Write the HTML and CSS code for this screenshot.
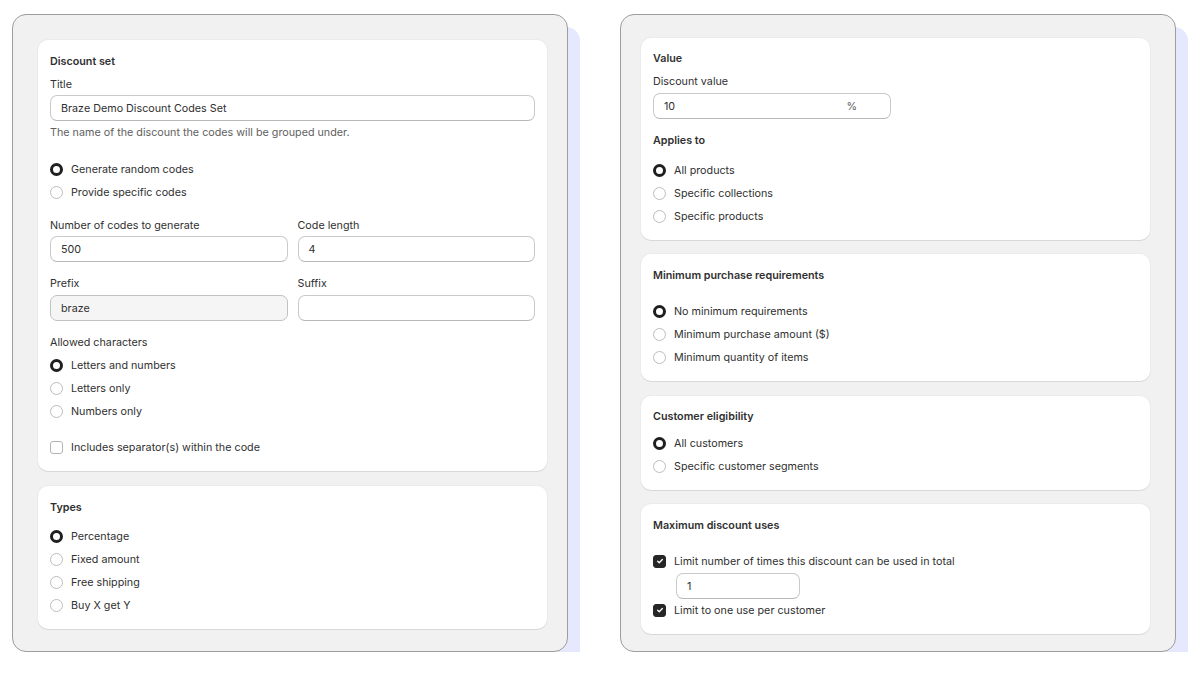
FILE: index.html
```html
<!DOCTYPE html>
<html>
<head>
<meta charset="utf-8">
<link rel="stylesheet" href="styles.css">
</head>
<body>
<div class="stage">
  <section class="panel panel-left">
    <div class="card card-set">
      <div class="row title">Discount set</div>
      <div class="row label mt7">Title</div>
      <div class="input mt3"><span>Braze Demo Discount Codes Set</span></div>
      <div class="row help mt3">The name of the discount the codes will be grouped under.</div>
      <div class="group mt21">
        <div class="row opt"><span class="radio on"></span>Generate random codes</div>
        <div class="row opt"><span class="radio"></span>Provide specific codes</div>
      </div>
      <div class="cols mt17">
        <div class="col">
          <div class="row label">Number of codes to generate</div>
          <div class="input mt3"><span>500</span></div>
        </div>
        <div class="col">
          <div class="row label">Code length</div>
          <div class="input mt3"><span>4</span></div>
        </div>
      </div>
      <div class="cols mt13">
        <div class="col">
          <div class="row label">Prefix</div>
          <div class="input filled mt4"><span>braze</span></div>
        </div>
        <div class="col">
          <div class="row label">Suffix</div>
          <div class="input mt4"></div>
        </div>
      </div>
      <div class="row label mt13">Allowed characters</div>
      <div class="group mt7">
        <div class="row opt"><span class="radio on"></span>Letters and numbers</div>
        <div class="row opt"><span class="radio"></span>Letters only</div>
        <div class="row opt"><span class="radio"></span>Numbers only</div>
      </div>
      <div class="row opt mt20"><span class="check"></span>Includes separator(s) within the code</div>
    </div>
    <div class="card card-types">
      <div class="row title">Types</div>
      <div class="group mt13">
        <div class="row opt"><span class="radio on"></span>Percentage</div>
        <div class="row opt"><span class="radio"></span>Fixed amount</div>
        <div class="row opt"><span class="radio"></span>Free shipping</div>
        <div class="row opt"><span class="radio"></span>Buy X get Y</div>
      </div>
    </div>
  </section>

  <section class="panel panel-right">
    <div class="card card-value">
      <div class="row title">Value</div>
      <div class="row label mt7">Discount value</div>
      <div class="input half mt4"><span>10</span><span class="suffix">%</span></div>
      <div class="row title mt13">Applies to</div>
      <div class="group mt14">
        <div class="row opt"><span class="radio on"></span>All products</div>
        <div class="row opt"><span class="radio"></span>Specific collections</div>
        <div class="row opt"><span class="radio"></span>Specific products</div>
      </div>
    </div>
    <div class="card card-min">
      <div class="row title">Minimum purchase requirements</div>
      <div class="group mt20">
        <div class="row opt"><span class="radio on"></span>No minimum requirements</div>
        <div class="row opt"><span class="radio"></span>Minimum purchase amount ($)</div>
        <div class="row opt"><span class="radio"></span>Minimum quantity of items</div>
      </div>
    </div>
    <div class="card card-elig">
      <div class="row title">Customer eligibility</div>
      <div class="group mt11">
        <div class="row opt"><span class="radio on"></span>All customers</div>
        <div class="row opt"><span class="radio"></span>Specific customer segments</div>
      </div>
    </div>
    <div class="card card-max">
      <div class="row title">Maximum discount uses</div>
      <div class="row opt mt20"><span class="check on"><svg viewBox="0 0 12 12" width="10" height="10"><path d="M3.2 6.3 L5.1 8.1 L8.8 4.2" fill="none" stroke="#fff" stroke-width="1.6" stroke-linecap="round" stroke-linejoin="round"/></svg></span>Limit number of times this discount can be used in total</div>
      <div class="input small mt4"><span>1</span></div>
      <div class="row opt mt3"><span class="check on"><svg viewBox="0 0 12 12" width="10" height="10"><path d="M3.2 6.3 L5.1 8.1 L8.8 4.2" fill="none" stroke="#fff" stroke-width="1.6" stroke-linecap="round" stroke-linejoin="round"/></svg></span>Limit to one use per customer</div>
    </div>
  </section>
</div>
</body>
</html>
```

FILE: styles.css
```css
* { box-sizing: border-box; }
html, body { margin: 0; padding: 0; background: #ffffff; }
body {
  font-family: Inter, "Noto Sans", "Liberation Sans", sans-serif;
  font-size: 10.75px;
  color: #303030;
}
.stage {
  display: flex;
  gap: 52px;
  padding: 14px 0 0 12px;
}
.panel {
  width: 556px;
  height: 638px;
  background: #f1f1f1;
  border: 1px solid #9d9d9d;
  border-radius: 14px;
  box-shadow: 12px 13px 0 0 #e6e8fd;
  display: flex;
  flex-direction: column;
}
.panel-left { padding: 25px 20px 0 25px; gap: 15px; }
.panel-right { padding: 23px 25px 0 20px; gap: 14px; }
.panel-right .card-elig { margin-top: 1px; }

.card {
  background: #ffffff;
  border-radius: 10px;
  box-shadow: 0 1px 0 0 #d8d8d8, 0 0 0 1px #ebebeb;
  padding: 13px 12px 16px 12px;
  display: flex;
  flex-direction: column;
}
.card-value, .card-elig { padding-top: 12px; }

.row {
  height: 16px;
  line-height: 17px;
  white-space: nowrap;
}
.title { font-weight: 600; color: #303030; }
.label { color: #303030; }
.help { color: #616161; }

.input {
  height: 26px;
  border: 1px solid #cacaca;
  border-bottom-color: #b8b8b8;
  border-radius: 7px;
  background: #fff;
  padding: 1px 10px 0;
  display: flex;
  align-items: center;
  line-height: 16px;
}
.input.filled { background: #f5f5f5; border-color: #c2c2c2; }
.input.half { width: 238px; }
.input.half .suffix { margin-left: auto; margin-right: 23px; color: #616161; }
.input.small { width: 124px; margin-left: 23px; }

.cols { display: flex; gap: 10px; }
.col { flex: 1; display: flex; flex-direction: column; }

.group { display: flex; flex-direction: column; gap: 7px; }
.opt { display: flex; align-items: center; gap: 8px; }

.radio {
  width: 13px;
  height: 13px;
  border-radius: 50%;
  border: 1px solid #bdbdbd;
  background: #fff;
  flex: none;
}
.radio.on { border: 3.5px solid #1f1f1f; }

.check {
  width: 13px;
  height: 13px;
  border-radius: 3px;
  border: 1px solid #b3b3b3;
  background: #fff;
  flex: none;
  display: flex;
  align-items: center;
  justify-content: center;
}
.check.on { background: #262626; border-color: #262626; }

.mt3 { margin-top: 3px; }
.mt4 { margin-top: 4px; }
.mt6 { margin-top: 6px; }
.mt7 { margin-top: 7px; }
.mt11 { margin-top: 11px; }
.mt13 { margin-top: 13px; }
.mt14 { margin-top: 14px; }
.mt17 { margin-top: 17px; }
.mt20 { margin-top: 20px; }
.mt21 { margin-top: 21px; }
```
